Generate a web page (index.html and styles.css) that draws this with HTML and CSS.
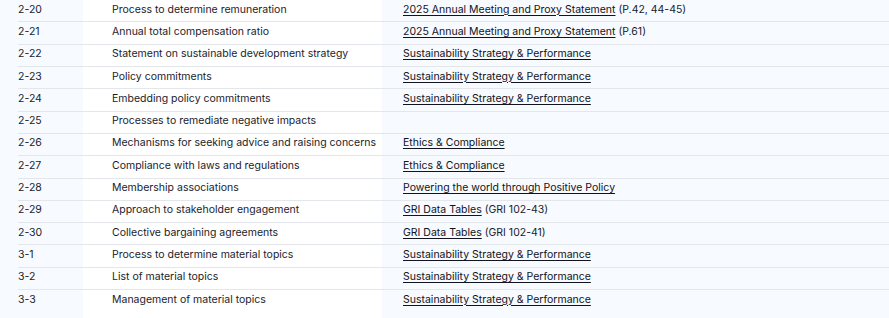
FILE: index.html
```html
<!DOCTYPE html>
<html lang="en">
<head>
<meta charset="utf-8">
<title>GRI Index</title>
<link rel="stylesheet" href="styles.css">
</head>
<body>
<div class="page">
  <div class="table">
    <div class="row"><div class="cell code">2-20</div><div class="cell desc">Process to determine remuneration</div><div class="cell ref"><a href="#">2025 Annual Meeting and Proxy Statement</a> (P.42, 44-45)</div></div>
    <div class="row"><div class="cell code">2-21</div><div class="cell desc">Annual total compensation ratio</div><div class="cell ref"><a href="#">2025 Annual Meeting and Proxy Statement</a> (P.61)</div></div>
    <div class="row"><div class="cell code">2-22</div><div class="cell desc">Statement on sustainable development strategy</div><div class="cell ref"><a href="#">Sustainability Strategy &amp; Performance</a></div></div>
    <div class="row"><div class="cell code">2-23</div><div class="cell desc">Policy commitments</div><div class="cell ref"><a href="#">Sustainability Strategy &amp; Performance</a></div></div>
    <div class="row"><div class="cell code">2-24</div><div class="cell desc">Embedding policy commitments</div><div class="cell ref"><a href="#">Sustainability Strategy &amp; Performance</a></div></div>
    <div class="row"><div class="cell code">2-25</div><div class="cell desc">Processes to remediate negative impacts</div><div class="cell ref"></div></div>
    <div class="row"><div class="cell code">2-26</div><div class="cell desc">Mechanisms for seeking advice and raising concerns</div><div class="cell ref"><a href="#">Ethics &amp; Compliance</a></div></div>
    <div class="row"><div class="cell code">2-27</div><div class="cell desc">Compliance with laws and regulations</div><div class="cell ref"><a href="#">Ethics &amp; Compliance</a></div></div>
    <div class="row"><div class="cell code">2-28</div><div class="cell desc">Membership associations</div><div class="cell ref"><a href="#">Powering the world through Positive Policy</a></div></div>
    <div class="row"><div class="cell code">2-29</div><div class="cell desc">Approach to stakeholder engagement</div><div class="cell ref"><a href="#">GRI Data Tables</a> (GRI 102-43)</div></div>
    <div class="row"><div class="cell code">2-30</div><div class="cell desc">Collective bargaining agreements</div><div class="cell ref"><a href="#">GRI Data Tables</a> (GRI 102-41)</div></div>
    <div class="row"><div class="cell code">3-1</div><div class="cell desc">Process to determine material topics</div><div class="cell ref"><a href="#">Sustainability Strategy &amp; Performance</a></div></div>
    <div class="row"><div class="cell code">3-2</div><div class="cell desc">List of material topics</div><div class="cell ref"><a href="#">Sustainability Strategy &amp; Performance</a></div></div>
    <div class="row row--last"><div class="cell code">3-3</div><div class="cell desc">Management of material topics</div><div class="cell ref"><a href="#">Sustainability Strategy &amp; Performance</a></div></div>
  </div>
</div>
</body>
</html>
```

FILE: styles.css
```css
html, body {
  margin: 0;
  padding: 0;
  background: #f7faff;
}

body {
  font-family: Inter, "Noto Sans", "Liberation Sans", sans-serif;
  font-size: 10.5px;
  color: #1a1c2b;
  overflow: hidden;
}

.page {
  padding-left: 18px;
  margin-top: -1px;
}

.table {
  display: flex;
  flex-direction: column;
}

.row {
  display: grid;
  grid-template-columns: 65px 299px 1fr;
  border-top: 1px solid #e3e6eb;
}

.row--last .cell {
  padding-bottom: 14px;
}

.cell {
  line-height: 15px;
  padding-top: 1.6px;
  padding-bottom: 4.73px;
  white-space: nowrap;
}

.code {
  padding-left: 0;
}

.desc {
  background: #ffffff;
  padding-left: 29px;
}

.ref {
  padding-left: 21px;
}

.ref a {
  color: #111320;
  text-decoration: underline;
  text-underline-offset: 2px;
}
```
